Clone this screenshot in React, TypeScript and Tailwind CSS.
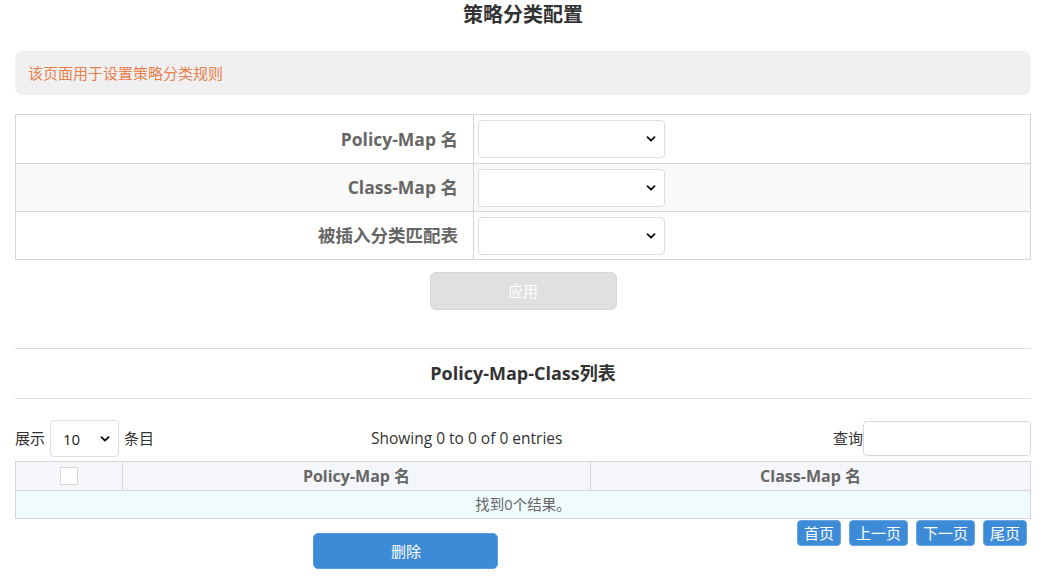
import React from "react";

const Chevron = () => (
  <svg width="12" height="12" viewBox="0 0 12 12" className="pointer-events-none absolute right-[7px] top-1/2 -translate-y-1/2">
    <path d="M2.5 4.2 L6 7.7 L9.5 4.2" fill="none" stroke="#111" strokeWidth="1.9" strokeLinecap="round" strokeLinejoin="round" />
  </svg>
);

const FakeSelect = ({ className, value }: { className: string; value?: string }) => (
  <div className={"relative rounded-[4px] border border-[#dcdde3] bg-white " + className}>
    {value ? <span className="absolute left-[12px] top-1/2 -translate-y-1/2 text-[15px] text-[#222]">{value}</span> : null}
    <Chevron />
  </div>
);

const rows = ["Policy-Map 名", "Class-Map 名", "被插入分类匹配表"];

export default function App() {
  return (
    <div
      className="min-h-[581px] w-[1047px] bg-white pl-[15px] pr-[16px] text-[#333]"
      style={{ fontFamily: '"Open Sans","Noto Sans CJK SC",sans-serif' }}
    >
      <div className="pt-[2px] text-center text-[20px] font-bold leading-[26px] text-[#333]">策略分类配置</div>

      <div className="mt-[23px] flex h-[44px] items-center rounded-[8px] bg-[#f0f0f2] pl-[13px] text-[15px] text-[#e8804a]">
        该页面用于设置策略分类规则
      </div>

      <div className="mt-[19px] border border-[#d3d6df]">
        {rows.map((r, i) => (
          <div
            key={r}
            className={
              "flex h-[48px] " +
              (i > 0 ? "border-t border-[#d3d6df] " : "") +
              (i === 1 ? "bg-[#f9f9f9]" : "bg-white")
            }
          >
            <div className="flex w-[458px] items-center justify-end border-r border-[#d3d6df] pr-[15px] text-[17.5px] font-bold text-[#666]">
              {r}
            </div>
            <div className="flex items-center pl-[4px]">
              <FakeSelect className="h-[38px] w-[187px]" />
            </div>
          </div>
        ))}
      </div>

      <div className="mt-[12px] flex justify-center">
        <div className="flex h-[38px] w-[187px] items-center justify-center rounded-[6px] border border-[#d6d6d6] bg-[#e0e0e0] text-[15px] text-white">
          应用
        </div>
      </div>

      <div className="mt-[38px] flex h-[51px] items-center justify-center border-y border-[#dcdcdc] text-[18px] font-bold text-[#333]">
        Policy-Map-Class列表
      </div>

      <div className="mt-[21px] flex h-[37px] items-center text-[15px] text-[#333]">
        <div className="flex w-[356px] items-center">
          <span>展示</span>
          <FakeSelect className="ml-[5px] h-[37px] w-[69px]" value="10" />
          <span className="ml-[5px]">条目</span>
        </div>
        <div className="flex-1 text-[15.5px]">Showing 0 to 0 of 0 entries</div>
        <div className="flex items-center">
          <span>查询</span>
          <div className="h-[35px] w-[168px] rounded-[4px] border border-[#d6d8de] bg-white" />
        </div>
      </div>

      <div className="mt-[4px] border border-[#d3d6df]">
        <div className="flex h-[28px] bg-[#f5f6fa] text-[16px] font-bold text-[#666]">
          <div className="flex w-[107px] items-center justify-center border-r border-[#d8dae2]">
            <div className="h-[18px] w-[18px] border border-[#d6d6d6] bg-white" />
          </div>
          <div className="flex w-[468px] items-center justify-center border-r border-[#d8dae2]">Policy-Map 名</div>
          <div className="flex flex-1 items-center justify-center">Class-Map 名</div>
        </div>
        <div className="flex h-[28px] items-center justify-center border-t border-[#d3d6df] bg-[#f0fbfd] text-[14.5px] text-[#666]">
          找到0个结果。
        </div>
      </div>

      <div className="flex">
        <div className="flex flex-1 justify-center pt-[14px]">
          <div className="flex h-[36px] w-[185px] items-center justify-center rounded-[5px] border border-[#5b9be0] bg-[#3d8bd6] text-[15px] text-white">
            删除
          </div>
        </div>
        <div className="flex gap-[8px] pr-[4px] pt-[1px] text-[15px] text-white">
          {["首页", "上一页", "下一页", "尾页"].map((t) => (
            <div
              key={t}
              className="flex h-[26px] items-center rounded-[4px] border border-[#6aa4e0] bg-[#3d8bd6] px-[6px]"
            >
              {t}
            </div>
          ))}
        </div>
      </div>
    </div>
  );
}
